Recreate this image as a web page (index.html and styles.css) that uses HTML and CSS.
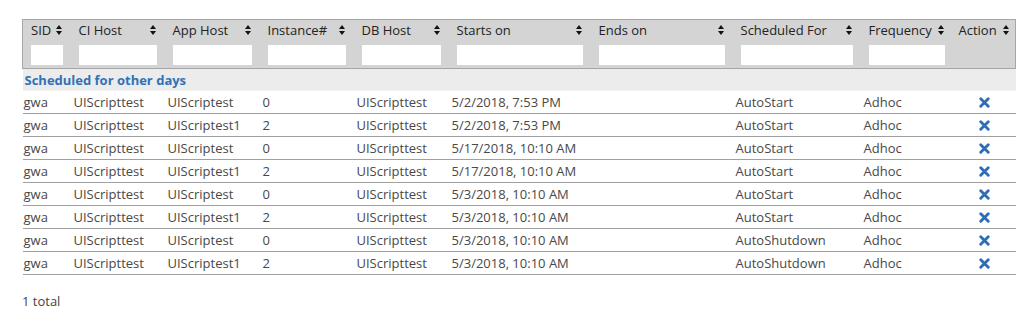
FILE: index.html
```html
<!DOCTYPE html>
<html>
<head>
<meta charset="utf-8">
<link rel="stylesheet" href="styles.css">
</head>
<body>
<div class="page">
  <table class="grid">
    <colgroup>
      <col class="c-sid"><col class="c-ci"><col class="c-app"><col class="c-inst"><col class="c-db">
      <col class="c-start"><col class="c-end"><col class="c-sched"><col class="c-freq"><col class="c-act">
    </colgroup>
    <thead>
      <tr>
        <th><div class="lbl"><span>SID</span><i class="sort"></i></div><input class="filter"></th>
        <th><div class="lbl"><span>CI Host</span><i class="sort"></i></div><input class="filter"></th>
        <th><div class="lbl"><span>App Host</span><i class="sort"></i></div><input class="filter"></th>
        <th><div class="lbl"><span>Instance#</span><i class="sort"></i></div><input class="filter"></th>
        <th><div class="lbl"><span>DB Host</span><i class="sort"></i></div><input class="filter"></th>
        <th><div class="lbl"><span>Starts on</span><i class="sort"></i></div><input class="filter"></th>
        <th><div class="lbl"><span>Ends on</span><i class="sort"></i></div><input class="filter"></th>
        <th><div class="lbl"><span>Scheduled For</span><i class="sort"></i></div><input class="filter"></th>
        <th><div class="lbl"><span>Frequency</span><i class="sort"></i></div><input class="filter"></th>
        <th class="act-h"><div class="lbl"><span>Action</span><i class="sort"></i></div></th>
      </tr>
    </thead>
    <tbody>
      <tr class="group"><td colspan="10">Scheduled for other days</td></tr>
      <tr><td>gwa</td><td>UIScripttest</td><td>UIScriptest</td><td>0</td><td>UIScripttest</td><td>5/2/2018, 7:53 PM</td><td></td><td>AutoStart</td><td>Adhoc</td><td class="act"><svg class="x" viewBox="0 0 10 10"><path d="M1.6 1.6 8.4 8.4M8.4 1.6 1.6 8.4"/></svg></td></tr>
      <tr><td>gwa</td><td>UIScripttest</td><td>UIScriptest1</td><td>2</td><td>UIScripttest</td><td>5/2/2018, 7:53 PM</td><td></td><td>AutoStart</td><td>Adhoc</td><td class="act"><svg class="x" viewBox="0 0 10 10"><path d="M1.6 1.6 8.4 8.4M8.4 1.6 1.6 8.4"/></svg></td></tr>
      <tr><td>gwa</td><td>UIScripttest</td><td>UIScriptest</td><td>0</td><td>UIScripttest</td><td>5/17/2018, 10:10 AM</td><td></td><td>AutoStart</td><td>Adhoc</td><td class="act"><svg class="x" viewBox="0 0 10 10"><path d="M1.6 1.6 8.4 8.4M8.4 1.6 1.6 8.4"/></svg></td></tr>
      <tr><td>gwa</td><td>UIScripttest</td><td>UIScriptest1</td><td>2</td><td>UIScripttest</td><td>5/17/2018, 10:10 AM</td><td></td><td>AutoStart</td><td>Adhoc</td><td class="act"><svg class="x" viewBox="0 0 10 10"><path d="M1.6 1.6 8.4 8.4M8.4 1.6 1.6 8.4"/></svg></td></tr>
      <tr><td>gwa</td><td>UIScripttest</td><td>UIScriptest</td><td>0</td><td>UIScripttest</td><td>5/3/2018, 10:10 AM</td><td></td><td>AutoStart</td><td>Adhoc</td><td class="act"><svg class="x" viewBox="0 0 10 10"><path d="M1.6 1.6 8.4 8.4M8.4 1.6 1.6 8.4"/></svg></td></tr>
      <tr><td>gwa</td><td>UIScripttest</td><td>UIScriptest1</td><td>2</td><td>UIScripttest</td><td>5/3/2018, 10:10 AM</td><td></td><td>AutoStart</td><td>Adhoc</td><td class="act"><svg class="x" viewBox="0 0 10 10"><path d="M1.6 1.6 8.4 8.4M8.4 1.6 1.6 8.4"/></svg></td></tr>
      <tr><td>gwa</td><td>UIScripttest</td><td>UIScriptest</td><td>0</td><td>UIScripttest</td><td>5/3/2018, 10:10 AM</td><td></td><td>AutoShutdown</td><td>Adhoc</td><td class="act"><svg class="x" viewBox="0 0 10 10"><path d="M1.6 1.6 8.4 8.4M8.4 1.6 1.6 8.4"/></svg></td></tr>
      <tr><td>gwa</td><td>UIScripttest</td><td>UIScriptest1</td><td>2</td><td>UIScripttest</td><td>5/3/2018, 10:10 AM</td><td></td><td>AutoShutdown</td><td>Adhoc</td><td class="act"><svg class="x" viewBox="0 0 10 10"><path d="M1.6 1.6 8.4 8.4M8.4 1.6 1.6 8.4"/></svg></td></tr>
    </tbody>
  </table>
  <div class="total">1 total</div>
</div>
</body>
</html>
```
FILE: styles.css
```css
html, body {
  margin: 0;
  padding: 0;
  background: #fff;
}
body {
  font-family: "Segoe UI", "Open Sans", sans-serif;
  font-size: 13px;
  color: #484848;
}
.page {
  padding: 19px 14px 0 22px;
}
.grid {
  border-collapse: collapse;
  table-layout: fixed;
  width: 993px;
}
.c-sid { width: 48px; }
.c-ci { width: 94px; }
.c-app { width: 95px; }
.c-inst { width: 94px; }
.c-db { width: 95px; }
.c-start { width: 142px; }
.c-end { width: 142px; }
.c-sched { width: 128px; }
.c-freq { width: 92px; }
.c-act { width: 63px; }

thead th {
  background: #d4d4d4;
  border-top: 1px solid #a6a6a6;
  border-bottom: 1px solid #a6a6a6;
  padding: 0 8px 3px 8px;
  text-align: left;
  font-weight: normal;
  color: #222;
  vertical-align: top;
}
thead th:first-child { border-left: 1px solid #a6a6a6; }
thead th:last-child { border-right: 1px solid #a6a6a6; padding: 0 5px 3px 6px; }
.lbl {
  display: flex;
  align-items: center;
  justify-content: space-between;
  height: 20px;
  padding-bottom: 2px;
  margin-bottom: 3px;
  white-space: nowrap;
}
.sort {
  display: inline-block;
  width: 7px;
  height: 10px;
  flex: none;
  position: relative;
}
.sort::before, .sort::after {
  content: "";
  position: absolute;
  left: 0;
  border-left: 3.5px solid transparent;
  border-right: 3.5px solid transparent;
}
.sort::before { top: 0; border-bottom: 4px solid #111; }
.sort::after { bottom: 0; border-top: 4px solid #111; }
.filter {
  display: block;
  width: 100%;
  box-sizing: border-box;
  height: 20px;
  border: none;
  background: #fff;
  margin: 0;
  padding: 0 3px;
}
.grid tbody td {
  height: 22px;
  padding: 0 3px;
  border-bottom: 1px solid #a0a0a0;
  white-space: nowrap;
  overflow: hidden;
  vertical-align: middle;
}
.grid tbody td:first-child { padding-left: 1px; }
.grid tbody tr.group td {
  background: #ececec;
  color: #2f72b8;
  font-weight: bold;
  height: 21px;
  padding: 0 2px;
  border-bottom: 1px solid #f4f4f4;
}
.grid tbody td.act {
  padding: 0;
}
.x {
  width: 11px;
  height: 11px;
  display: block;
  margin: 0 0 0 26px;
}
.x path {
  stroke: #2f6db5;
  stroke-width: 2.6;
  stroke-linecap: round;
  fill: none;
}
.total {
  margin-top: 17px;
  color: #444;
}
```
